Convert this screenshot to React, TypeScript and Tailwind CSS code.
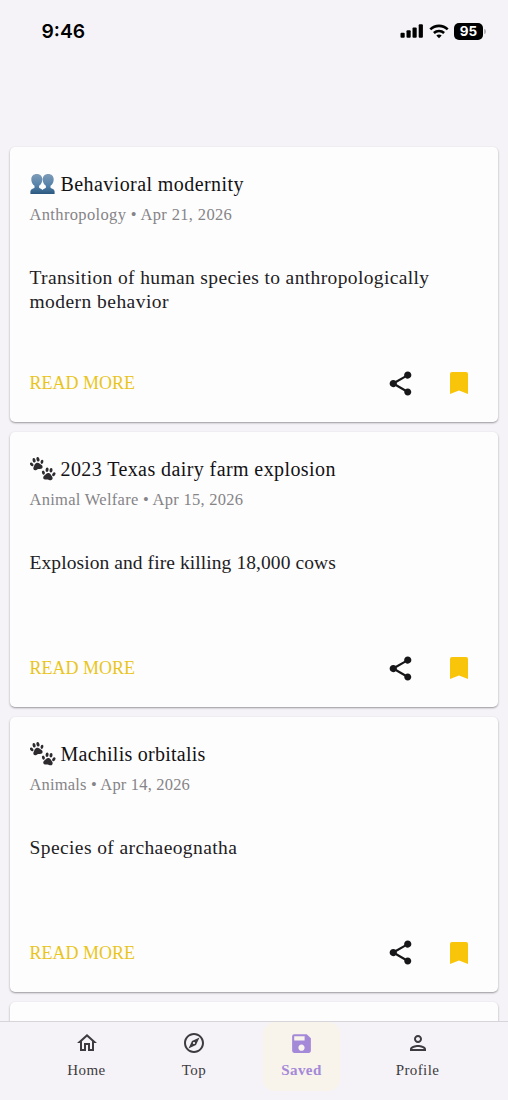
import {MdOutlineExplore, MdOutlineHome, MdOutlinePerson, MdSave, MdShare} from 'react-icons/md';
import type {ReactNode} from 'react';

type Article = {
    icon: 'people' | 'paws';
    title: string;
    titleTracking: string;
    meta: string;
    metaTracking: string;
    lines: { text: string; tracking: string }[];
};

const articles: Article[] = [
    {
        icon: 'people',
        title: 'Behavioral modernity',
        titleTracking: 'tracking-[0.42px]',
        meta: 'Anthropology • Apr 21, 2026',
        metaTracking: 'tracking-[0.35px]',
        lines: [
            {text: 'Transition of human species to anthropologically', tracking: 'tracking-[0.37px]'},
            {text: 'modern behavior', tracking: 'tracking-[0.45px]'},
        ],
    },
    {
        icon: 'paws',
        title: '2023 Texas dairy farm explosion',
        titleTracking: 'tracking-[0.41px]',
        meta: 'Animal Welfare • Apr 15, 2026',
        metaTracking: 'tracking-[0.28px]',
        lines: [{text: 'Explosion and fire killing 18,000 cows', tracking: 'tracking-[0.08px]'}],
    },
    {
        icon: 'paws',
        title: 'Machilis orbitalis',
        titleTracking: 'tracking-[0.25px]',
        meta: 'Animals • Apr 14, 2026',
        metaTracking: 'tracking-[0.18px]',
        lines: [{text: 'Species of archaeognatha', tracking: 'tracking-[0.4px]'}],
    },
];

function PeopleIcon() {
    return (
        <svg viewBox="0 0 26 22" className="h-[22px] w-[26px] shrink-0">
            <defs>
                <linearGradient id="bust" x1="0" y1="0" x2="0" y2="1">
                    <stop offset="0" stopColor="#7f9cb8"/>
                    <stop offset="0.6" stopColor="#5280a8"/>
                    <stop offset="1" stopColor="#2c587f"/>
                </linearGradient>
            </defs>
            <path
                fill="url(#bust)"
                d="M6.800 1C3.400 1 1.300 3.200 1.300 6.500c0 2.900 1.400 5 3.200 6.300v1.900C3 15.800.6 16 .4 18.200V21h24.200v-2.800c-.2-2.200-2.600-2.400-4.100-3.500v-1.900c1.800-1.300 3.200-3.400 3.200-6.300C23.700 3.200 21.600 1 18.200 1s-5.500 2.200-5.500 5.500c0 2.900 1.400 5 3.200 6.300v1.900c-1 .9-2.500 1.200-3.400 2.200-.9-1-2.400-1.300-3.400-2.200v-1.900c1.800-1.300 3.200-3.400 3.200-6.300C12.300 3.200 10.200 1 6.800 1z"
            />
        </svg>
    );
}

function Paw({transform}: { transform: string }) {
    return (
        <g transform={transform}>
            <ellipse cx="-5.300" cy="-0.600" rx="1.400" ry="2.100" transform="rotate(-25 -5.300 -0.600)"/>
            <ellipse cx="-2" cy="-4" rx="1.500" ry="2.300"/>
            <ellipse cx="2" cy="-4" rx="1.500" ry="2.300"/>
            <ellipse cx="5.300" cy="-0.600" rx="1.400" ry="2.100" transform="rotate(25 5.300 -0.600)"/>
            <path d="M0-1c2.100 0 2.700 1.900 3.900 3.100 1.500 1.500.9 3.900-1.200 3.900C1.600 6 1.100 5.500 0 5.500S-1.600 6-2.700 6c-2.100 0-2.700-2.400-1.200-3.900C-2.700.9-2.100-1 0-1z"/>
        </g>
    );
}

function PawsIcon() {
    return (
        <svg viewBox="0 0 26 24" className="h-6 w-[26px] shrink-0" fill="#2d2b2e">
            <Paw transform="translate(7 6.700) rotate(-14)"/>
            <Paw transform="translate(18.500 17) rotate(8)"/>
        </svg>
    );
}

function ArticleCard({article}: { article: Article }) {
    return (
        <article className="flex h-[274.8px] shrink-0 flex-col rounded-[5px] bg-[#fefdfe] px-[19.5px] pt-[25px] shadow-[0_1px_2px_rgba(40,35,45,0.45)]">
            <div className="flex h-6 items-center gap-[5px]">
                {article.icon === 'people' ? <PeopleIcon/> : <PawsIcon/>}
                <h2 className={`whitespace-nowrap text-[20px] leading-6 text-[#131214] ${article.titleTracking}`}>
                    {article.title}
                </h2>
            </div>
            <p className={`mt-[9px] whitespace-nowrap text-[16.5px] leading-5 text-[#858487] ${article.metaTracking}`}>
                {article.meta}
            </p>
            <div className="mt-[41px] h-[92px] text-[19.5px] leading-6 text-[#222123]">
                {article.lines.map(line => (
                    <p key={line.text} className={`whitespace-nowrap ${line.tracking}`}>{line.text}</p>
                ))}
            </div>
            <div className="flex h-[50px] items-center">
                <button className="text-[18px] leading-6 text-[#e9c51c]">READ MORE</button>
                <MdShare className="ml-auto size-[29px] text-[#171618]"/>
                <svg viewBox="0 0 18 22" className="mr-[10.5px] ml-[35.5px] h-[22px] w-[18px]" fill="#f8c50a">
                    <path d="M2 0h14a2 2 0 0 1 2 2v20l-9-3.500L0 22V2a2 2 0 0 1 2-2z"/>
                </svg>
            </div>
        </article>
    );
}

function StatusBar() {
    return (
        <header className="flex h-[62px] shrink-0 items-center justify-between pr-[22px] pl-[41.5px] font-['Inter',sans-serif]">
            <span className="text-[19.3px] leading-6 font-semibold text-black">9:46</span>
            <div className="flex items-center">
                <svg viewBox="0 0 24 16" className="h-4 w-6">
                    <rect x="0.500" y="9.800" width="4.200" height="5" rx="1"/>
                    <rect x="6.500" y="7.300" width="4.200" height="7.500" rx="1"/>
                    <rect x="12.500" y="4.500" width="4.200" height="10.300" rx="1"/>
                    <rect x="18.700" y="1.200" width="4.200" height="13.600" rx="1"/>
                </svg>
                <svg viewBox="0 0 20 15" className="ml-[5px] h-[15px] w-5" fill="none" stroke="#000" strokeWidth="2.600">
                    <path d="M1.300 5.400C6.200.700 13.800.700 18.700 5.400"/>
                    <path d="M4.900 9C7.800 6.300 12.200 6.300 15.100 9"/>
                    <path d="M10 14.300 7.300 11.500c1.500-1.400 3.900-1.400 5.400 0z" fill="#000" stroke="none"/>
                </svg>
                <span className="ml-[5px] flex h-[17px] w-[29px] items-center justify-center rounded-[5px] bg-black text-[13.5px] font-bold text-white">
                    95
                </span>
                <span className="ml-px h-[5px] w-[2px] rounded-r-full bg-[#b5b3b7]"/>
            </div>
        </header>
    );
}

function NavItem({icon, label, active = false}: { icon: ReactNode; label: string; active?: boolean }) {
    return (
        <a
            className={`flex h-[69px] w-[77px] flex-col items-center rounded-[12px] pt-[9px] ${active ? 'bg-[#f8f3eb] font-bold text-[#a489d8]' : 'text-[#3d3b3f]'}`}
        >
            {icon}
            <span className="mt-[6px] text-[15px] leading-[18px] tracking-[0.4px]">{label}</span>
        </a>
    );
}

export default function App() {
    return (
        <div className="flex h-[1100px] w-[508px] flex-col overflow-hidden bg-[#f5f3f7] font-['Liberation_Serif',serif]">
            <StatusBar/>
            <main className="flex min-h-0 flex-1 flex-col gap-[10px] overflow-hidden px-[10px] pt-[85.4px]">
                {articles.map(article => <ArticleCard key={article.title} article={article}/>)}
                {/* The next card is only peeking out above the tab bar */}
                <div className="h-[274.8px] shrink-0 rounded-[5px] bg-[#fefdfe] shadow-[0_1px_2px_rgba(40,35,45,0.45)]"/>
            </main>
            <nav className="flex h-[79px] shrink-0 justify-between border-t border-[#d7d5d9] pr-[52px] pl-[48px]">
                <div className="flex gap-[30.5px]">
                    <NavItem label="Home" icon={<MdOutlineHome className="size-6"/>}/>
                    <NavItem label="Top" icon={<MdOutlineExplore className="size-6"/>}/>
                    <NavItem label="Saved" icon={<MdSave className="size-[25px] -mb-px"/>} active/>
                </div>
                <NavItem label="Profile" icon={<MdOutlinePerson className="size-6"/>}/>
            </nav>
        </div>
    );
}
